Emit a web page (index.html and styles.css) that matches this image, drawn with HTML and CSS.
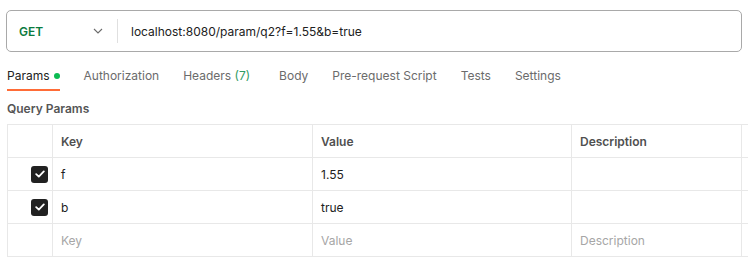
FILE: index.html
```html
<!DOCTYPE html>
<html>
<head>
<meta charset="utf-8">
<link rel="stylesheet" href="styles.css">
</head>
<body>
<div class="page">
  <div class="urlbar">
    <div class="method">
      <span class="method-name">GET</span>
      <svg class="chev" width="10" height="6" viewBox="0 0 10 6"><path d="M1 1l4 4 4-4" fill="none" stroke="#6b6b6b" stroke-width="1.1"/></svg>
    </div>
    <div class="divider"></div>
    <div class="url">localhost:8080/param/q2?f=1.55&amp;b=true</div>
  </div>
  <div class="tabs">
    <div class="tab active">Params<span class="dot"></span></div>
    <div class="tab">Authorization</div>
    <div class="tab wide">Headers <span class="count">(7)</span></div>
    <div class="tab">Body</div>
    <div class="tab">Pre-request Script</div>
    <div class="tab">Tests</div>
    <div class="tab">Settings</div>
  </div>
  <div class="section-title">Query Params</div>
  <div class="table">
    <div class="row head">
      <div class="cell chk"></div>
      <div class="cell key">Key</div>
      <div class="cell val">Value</div>
      <div class="cell desc">Description</div>
      <div class="cell extra"></div>
    </div>
    <div class="row">
      <div class="cell chk"><span class="box"><svg width="10" height="8" viewBox="0 0 10 8"><path d="M1.2 4.2l2.6 2.4L8.8 1.4" fill="none" stroke="#fff" stroke-width="1.8" stroke-linecap="round" stroke-linejoin="round"/></svg></span></div>
      <div class="cell key">f</div>
      <div class="cell val">1.55</div>
      <div class="cell desc"></div>
      <div class="cell extra noline"></div>
    </div>
    <div class="row">
      <div class="cell chk"><span class="box"><svg width="10" height="8" viewBox="0 0 10 8"><path d="M1.2 4.2l2.6 2.4L8.8 1.4" fill="none" stroke="#fff" stroke-width="1.8" stroke-linecap="round" stroke-linejoin="round"/></svg></span></div>
      <div class="cell key">b</div>
      <div class="cell val">true</div>
      <div class="cell desc"></div>
      <div class="cell extra noline"></div>
    </div>
    <div class="row ph">
      <div class="cell chk"></div>
      <div class="cell key">Key</div>
      <div class="cell val">Value</div>
      <div class="cell desc">Description</div>
      <div class="cell extra noline"></div>
    </div>
  </div>
</div>
</body>
</html>
```
FILE: styles.css
```css
html, body {
  margin: 0;
  padding: 0;
  background: #ffffff;
  overflow: hidden;
}
body {
  font-family: Inter, "Noto Sans", sans-serif;
  font-size: 12px;
  color: #212121;
  width: 748px;
  height: 273px;
}
.page {
  padding-top: 10px;
}
.urlbar {
  margin-left: 6px;
  width: 736px;
  height: 42px;
  box-sizing: border-box;
  border: 1px solid #a9a9a9;
  border-radius: 5px;
  display: flex;
  align-items: center;
}
.method {
  width: 110px;
  display: flex;
  align-items: center;
  padding-left: 12px;
  box-sizing: border-box;
}
.method-name {
  color: #0b7a3e;
  font-weight: 600;
  font-size: 12px;
  width: 74px;
}
.chev {
  display: block;
}
.divider {
  width: 1px;
  height: 24px;
  background: #e0e0e0;
}
.url {
  margin-left: 13px;
  font-size: 12px;
  color: #212121;
}
.tabs {
  display: flex;
  margin-top: 13px;
  padding-left: 7px;
  height: 27px;
}
.tab {
  font-size: 12px;
  color: #6b6b6b;
  margin-right: 24px;
  line-height: 22px;
  box-sizing: border-box;
  height: 26px;
}
.tab.wide {
  margin-right: 29px;
}
.tab.active {
  color: #212121;
  border-bottom: 2px solid #ff6c37;
  display: flex;
  align-items: flex-start;
}
.dot {
  display: inline-block;
  width: 6px;
  height: 6px;
  border-radius: 50%;
  background: #0cbb52;
  margin-left: 4px;
  margin-top: 8px;
}
.count {
  color: #2f9b63;
  font-weight: 400;
}
.section-title {
  margin-left: 7px;
  margin-top: 10px;
  font-weight: 600;
  font-size: 12px;
  color: #555555;
  line-height: 14px;
}
.table {
  margin-top: 8px;
  margin-left: 7px;
  border-top: 1px solid #e8e8e8;
  border-left: 1px solid #e8e8e8;
}
.row {
  display: flex;
  height: 33px;
  box-sizing: border-box;
  border-bottom: 1px solid #e8e8e8;
}
.cell {
  flex-shrink: 0;
  box-sizing: border-box;
  border-right: 1px solid #e8e8e8;
  display: flex;
  align-items: center;
  padding-left: 8px;
  font-size: 12px;
  color: #212121;
}
.cell.noline {
  border-right: none;
}
.chk {
  width: 45px;
  justify-content: flex-end;
  padding-right: 4px;
}
.key { width: 260px; }
.val { width: 259px; }
.desc { width: 170px; }
.extra { width: 20px; }
.head .cell {
  font-weight: 600;
  color: #505050;
}
.ph .cell {
  color: #a6a6a6;
}
.box {
  width: 17px;
  height: 17px;
  background: #212121;
  border-radius: 3px;
  display: flex;
  align-items: center;
  justify-content: center;
}
```
